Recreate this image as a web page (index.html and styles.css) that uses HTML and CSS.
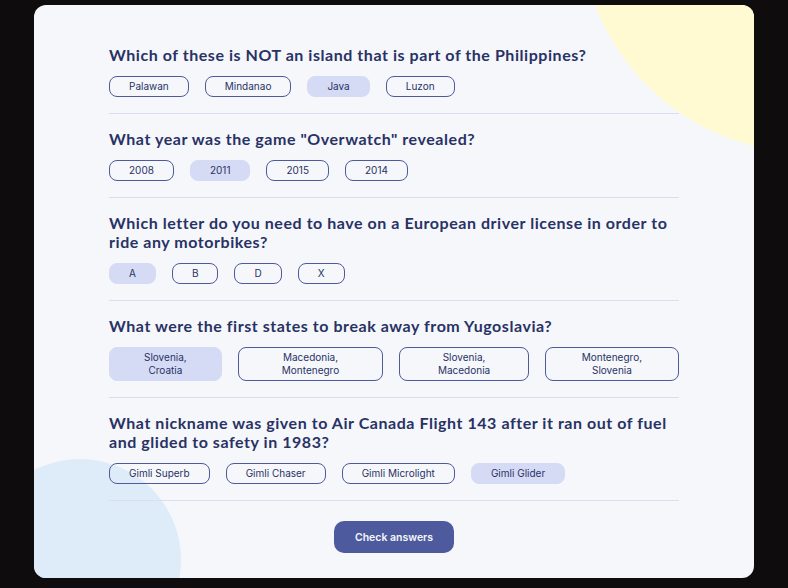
FILE: index.html
```html
<!DOCTYPE html>
<html lang="en">
<head>
<meta charset="utf-8">
<title>Quizzical</title>
<link rel="stylesheet" href="styles.css">
</head>
<body>
<main class="card">
  <div class="blob blob-yellow"></div>
  <div class="blob blob-blue"></div>
  <div class="quiz">
    <section class="question">
      <h2 class="q-title">Which of these is NOT an island that is part of the Philippines?</h2>
      <div class="answers">
        <button class="answer">Palawan</button>
        <button class="answer">Mindanao</button>
        <button class="answer selected">Java</button>
        <button class="answer">Luzon</button>
      </div>
    </section>
    <section class="question">
      <h2 class="q-title">What year was the game "Overwatch" revealed?</h2>
      <div class="answers">
        <button class="answer">2008</button>
        <button class="answer selected">2011</button>
        <button class="answer">2015</button>
        <button class="answer">2014</button>
      </div>
    </section>
    <section class="question">
      <h2 class="q-title">Which letter do you need to have on a European driver license in order to ride any motorbikes?</h2>
      <div class="answers">
        <button class="answer selected">A</button>
        <button class="answer">B</button>
        <button class="answer">D</button>
        <button class="answer">X</button>
      </div>
    </section>
    <section class="question">
      <h2 class="q-title">What were the first states to break away from Yugoslavia?</h2>
      <div class="answers">
        <button class="answer selected">Slovenia, Croatia</button>
        <button class="answer">Macedonia, Montenegro</button>
        <button class="answer">Slovenia, Macedonia</button>
        <button class="answer">Montenegro, Slovenia</button>
      </div>
    </section>
    <section class="question">
      <h2 class="q-title">What nickname was given to Air Canada Flight 143 after it ran out of fuel and glided to safety in 1983?</h2>
      <div class="answers">
        <button class="answer">Gimli Superb</button>
        <button class="answer">Gimli Chaser</button>
        <button class="answer">Gimli Microlight</button>
        <button class="answer selected">Gimli Glider</button>
      </div>
    </section>
    <div class="actions">
      <button class="check">Check answers</button>
    </div>
  </div>
</main>
</body>
</html>
```

FILE: styles.css
```css
html, body {
  margin: 0;
  background: #0e0c0c;
}
body {
  padding: 5px 34px 10px;
}
.card {
  position: relative;
  overflow: hidden;
  background: #f5f7fb;
  border-radius: 12px;
  height: 573px;
  box-sizing: border-box;
  padding: 40px 75px 0;
}
.blob {
  position: absolute;
  border-radius: 50%;
  z-index: 0;
}
.blob-yellow {
  background: #fffad1;
  width: 460px;
  height: 460px;
  left: 546px;
  top: -312px;
}
.blob-blue {
  background: #deebf8;
  width: 202px;
  height: 202px;
  left: -55px;
  top: 454px;
}
.quiz {
  position: relative;
  z-index: 1;
  display: flex;
  flex-direction: column;
}
.question {
  padding: 0 0 16px;
  margin-bottom: 15px;
  border-bottom: 1px solid #dbdef0;
}
.q-title {
  margin: 0 0 12px;
  font-family: "Lato", "DejaVu Sans", sans-serif;
  font-weight: 700;
  font-size: 16px;
  line-height: 19px;
  color: #293264;
  letter-spacing: 0.55px;
}
.answers {
  display: flex;
  gap: 16px;
}
.answer {
  font-family: "Inter", "Liberation Sans", sans-serif;
  font-size: 10px;
  line-height: 13px;
  color: #293264;
  background: transparent;
  border: 1px solid #4d5b9e;
  border-radius: 8px;
  padding: 3px 19px;
  margin: 0;
  cursor: pointer;
}
.answer.selected {
  background: #d6dbf5;
  border-color: #d6dbf5;
}
.actions {
  display: flex;
  justify-content: center;
  margin-top: 5px;
}
.check {
  font-family: "Inter", "Liberation Sans", sans-serif;
  font-weight: 600;
  font-size: 10.5px;
  color: #f5f7fb;
  background: #4d5b9e;
  border: none;
  border-radius: 10px;
  width: 120px;
  height: 32px;
  padding: 0;
}
```
